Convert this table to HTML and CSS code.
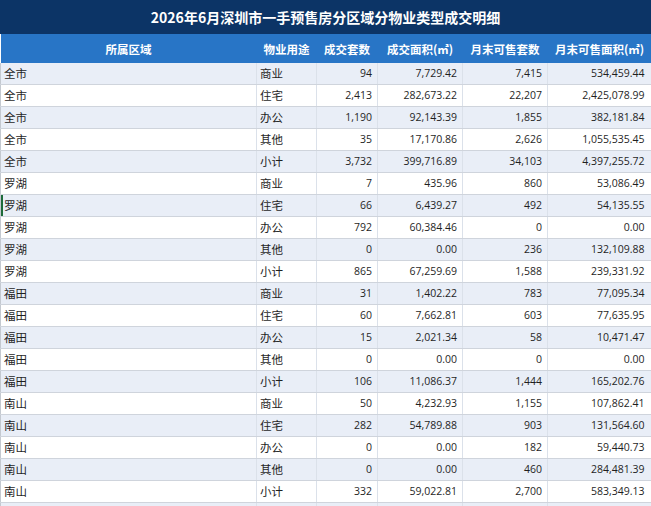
FILE: index.html
```html
<!DOCTYPE html>
<html lang="zh-CN">
<head>
<meta charset="utf-8">
<title>2026年6月深圳市一手预售房分区域分物业类型成交明细</title>
<link rel="stylesheet" href="styles.css">
</head>
<body>
<div class="title">2026年6月深圳市一手预售房分区域分物业类型成交明细</div>
<table class="grid">
<colgroup>
<col class="c-area"><col class="c-type"><col class="c-n1"><col class="c-a1"><col class="c-n2"><col class="c-a2">
</colgroup>
<thead>
<tr><th>所属区域</th><th>物业用途</th><th>成交套数</th><th>成交面积(㎡)</th><th>月末可售套数</th><th>月末可售面积(㎡)</th></tr>
</thead>
<tbody>
<tr><td>全市</td><td>商业</td><td class="num">94</td><td class="num">7,729.42</td><td class="num">7,415</td><td class="num last">534,459.44</td></tr>
<tr><td>全市</td><td>住宅</td><td class="num">2,413</td><td class="num">282,673.22</td><td class="num">22,207</td><td class="num last">2,425,078.99</td></tr>
<tr><td>全市</td><td>办公</td><td class="num">1,190</td><td class="num">92,143.39</td><td class="num">1,855</td><td class="num last">382,181.84</td></tr>
<tr><td>全市</td><td>其他</td><td class="num">35</td><td class="num">17,170.86</td><td class="num">2,626</td><td class="num last">1,055,535.45</td></tr>
<tr><td>全市</td><td>小计</td><td class="num">3,732</td><td class="num">399,716.89</td><td class="num">34,103</td><td class="num last">4,397,255.72</td></tr>
<tr><td>罗湖</td><td>商业</td><td class="num">7</td><td class="num">435.96</td><td class="num">860</td><td class="num last">53,086.49</td></tr>
<tr><td class="mark">罗湖</td><td>住宅</td><td class="num">66</td><td class="num">6,439.27</td><td class="num">492</td><td class="num last">54,135.55</td></tr>
<tr><td>罗湖</td><td>办公</td><td class="num">792</td><td class="num">60,384.46</td><td class="num">0</td><td class="num last">0.00</td></tr>
<tr><td>罗湖</td><td>其他</td><td class="num">0</td><td class="num">0.00</td><td class="num">236</td><td class="num last">132,109.88</td></tr>
<tr><td>罗湖</td><td>小计</td><td class="num">865</td><td class="num">67,259.69</td><td class="num">1,588</td><td class="num last">239,331.92</td></tr>
<tr><td>福田</td><td>商业</td><td class="num">31</td><td class="num">1,402.22</td><td class="num">783</td><td class="num last">77,095.34</td></tr>
<tr><td>福田</td><td>住宅</td><td class="num">60</td><td class="num">7,662.81</td><td class="num">603</td><td class="num last">77,635.95</td></tr>
<tr><td>福田</td><td>办公</td><td class="num">15</td><td class="num">2,021.34</td><td class="num">58</td><td class="num last">10,471.47</td></tr>
<tr><td>福田</td><td>其他</td><td class="num">0</td><td class="num">0.00</td><td class="num">0</td><td class="num last">0.00</td></tr>
<tr><td>福田</td><td>小计</td><td class="num">106</td><td class="num">11,086.37</td><td class="num">1,444</td><td class="num last">165,202.76</td></tr>
<tr><td>南山</td><td>商业</td><td class="num">50</td><td class="num">4,232.93</td><td class="num">1,155</td><td class="num last">107,862.41</td></tr>
<tr><td>南山</td><td>住宅</td><td class="num">282</td><td class="num">54,789.88</td><td class="num">903</td><td class="num last">131,564.60</td></tr>
<tr><td>南山</td><td>办公</td><td class="num">0</td><td class="num">0.00</td><td class="num">182</td><td class="num last">59,440.73</td></tr>
<tr><td>南山</td><td>其他</td><td class="num">0</td><td class="num">0.00</td><td class="num">460</td><td class="num last">284,481.39</td></tr>
<tr><td>南山</td><td>小计</td><td class="num">332</td><td class="num">59,022.81</td><td class="num">2,700</td><td class="num last">583,349.13</td></tr>
<tr class="spacer"><td></td><td></td><td></td><td></td><td></td><td></td></tr>
</tbody>
</table>
</body>
</html>
```
FILE: styles.css
```css
html, body {
  margin: 0;
  padding: 0;
  overflow: hidden;
  background: #ffffff;
}
body {
  width: 651px;
  font-family: "Noto Sans CJK SC", "Noto Sans", sans-serif;
  color: #1f1f1f;
}
.title {
  height: 34px;
  line-height: 34px;
  background: #0c3466;
  color: #ffffff;
  font-weight: 700;
  font-size: 14px;
  text-align: center;
}
.grid {
  width: 651px;
  border-collapse: collapse;
  table-layout: fixed;
}
.c-area { width: 256px; }
.c-type { width: 60px; }
.c-n1 { width: 61px; }
.c-a1 { width: 85px; }
.c-n2 { width: 85px; }
.c-a2 { width: 104px; }
.grid th {
  height: 29px;
  padding: 0;
  background: #2875c6;
  color: #ffffff;
  font-weight: 700;
  font-size: 11.5px;
  text-align: center;
  border: none;
}
.grid td {
  height: 21px;
  padding: 0 4px 0 3px;
  font-size: 11.5px;
  line-height: 21px;
  border-bottom: 1px solid #cfd4dc;
  border-right: 1px solid #dbe1ea;
  white-space: nowrap;
  overflow: hidden;
}
.grid td:first-child {
  border-left: 1px solid #c4c9d0;
}
.grid tbody tr:nth-child(odd) td {
  background: #e9eef7;
}
.grid td.num {
  text-align: right;
  font-family: "Open Sans", "Noto Sans", sans-serif;
  font-size: 10.5px;
  padding-right: 5px;
}
.grid td.last {
  padding-right: 7px;
  border-right: none;
}
.grid td.mark {
  box-shadow: inset 2px 0 0 #1d6b3a;
}
.spacer td {
  height: 21px;
}
```
